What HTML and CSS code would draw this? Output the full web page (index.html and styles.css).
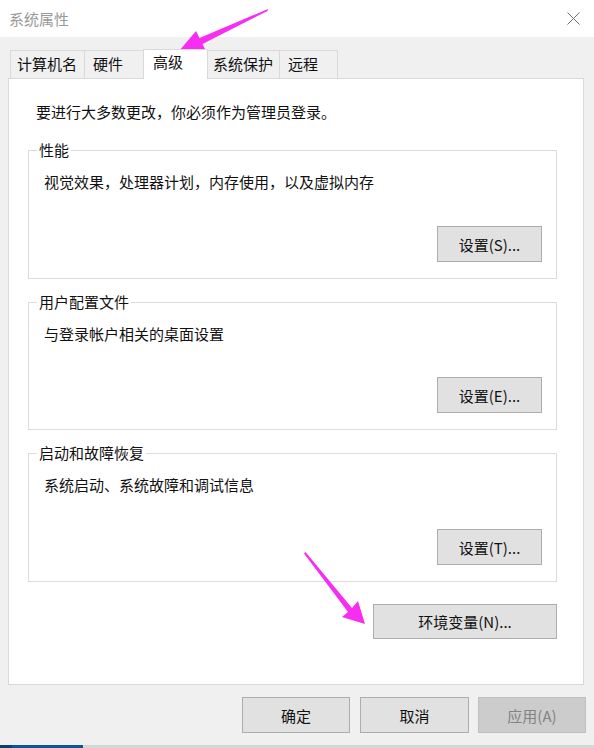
FILE: index.html
```html
<!DOCTYPE html>
<html lang="zh-CN">
<head>
<meta charset="utf-8">
<title>系统属性</title>
<link rel="stylesheet" href="styles.css">
</head>
<body>
<div class="window">
  <div class="titlebar">
    <span class="title">系统属性</span>
    <svg class="close" width="13" height="13" viewBox="0 0 13 13"><path d="M0.5 0.5 L12.5 12.5 M12.5 0.5 L0.5 12.5" stroke="#6b6b6b" stroke-width="1" fill="none"/></svg>
  </div>
  <div class="main">
    <div class="tabs">
      <div class="tab t1">计算机名</div>
      <div class="tab t2">硬件</div>
      <div class="tab active t3">高级</div>
      <div class="tab t4">系统保护</div>
      <div class="tab t5">远程</div>
    </div>
    <div class="panel">
      <p class="intro">要进行大多数更改，你必须作为管理员登录。</p>
      <div class="group">
        <span class="group-title">性能</span>
        <p class="desc">视觉效果，处理器计划，内存使用，以及虚拟内存</p>
        <button class="btn small">设置(S)...</button>
      </div>
      <div class="group mid">
        <span class="group-title">用户配置文件</span>
        <p class="desc">与登录帐户相关的桌面设置</p>
        <button class="btn small">设置(E)...</button>
      </div>
      <div class="group last">
        <span class="group-title">启动和故障恢复</span>
        <p class="desc">系统启动、系统故障和调试信息</p>
        <button class="btn small">设置(T)...</button>
      </div>
      <button class="btn env">环境变量(N)...</button>
    </div>
    <div class="footer">
      <button class="btn foot ok">确定</button>
      <button class="btn foot cancel">取消</button>
      <button class="btn foot disabled">应用(A)</button>
    </div>
  </div>
  <div class="strip"><span class="s1"></span><span class="s2"></span><span class="s3"></span></div>
  <svg class="arrows" width="594" height="748" viewBox="0 0 594 748">
    <polygon points="268,9 199.5,38 196,31 179,51 206,51 202.5,44 267.5,11" fill="#f72ef2"/>
    <polygon points="305.5,552 352,608 358,601 365,624 342,617 348,612 304,553.5" fill="#f72ef2"/>
  </svg>
</div>
</body>
</html>
```

FILE: styles.css
```css
* { box-sizing: border-box; }
html, body { margin: 0; padding: 0; }
body {
  font-family: "Noto Sans CJK SC", "Microsoft YaHei", sans-serif;
  font-size: 15px;
  color: #111111;
  background: #f0f0f0;
}
.window {
  position: relative;
  width: 594px;
  height: 748px;
  display: flex;
  flex-direction: column;
  background: #f0f0f0;
  overflow: hidden;
}
.titlebar {
  height: 37px;
  background: #ffffff;
  display: flex;
  align-items: center;
  justify-content: space-between;
  padding: 0 14px 0 9px;
}
.title { color: #9a9a9a; line-height: 20px; }
.close { display: block; margin-top: -1px; }
.main {
  padding: 12px 0 0 8px;
  display: flex;
  flex-direction: column;
}
.tabs {
  display: flex;
  align-items: flex-end;
  height: 30px;
  padding-left: 2px;
  margin-bottom: -1px;
  position: relative;
  z-index: 1;
}
.tab {
  height: 28px;
  margin-bottom: 1px;
  border: 1px solid #d9d9d9;
  border-bottom: none;
  background: #f0f0f0;
  line-height: 25px;
  padding-left: 7px;
  white-space: nowrap;
  margin-left: -1px;
}
.t1 { width: 75px; margin-left: 0; padding-left: 6px; }
.t2 { width: 60px; padding-left: 8px; }
.t3 { width: 65px; }
.t4 { width: 73px; padding-left: 5px; }
.t5 { width: 59px; padding-left: 8px; }
.tab.active {
  height: 30px;
  margin-bottom: 0;
  background: #ffffff;
  padding-left: 9px;
  line-height: 24px;
  border-bottom: none;
}
.panel {
  width: 576px;
  height: 607px;
  background: #ffffff;
  border: 1px solid #d9d9d9;
  padding: 23px 26px 0 19px;
  display: flex;
  flex-direction: column;
}
.intro {
  margin: 0 0 28px 8px;
  line-height: 20px;
}
.group {
  height: 129px;
  border: 1px solid #dcdcdc;
  padding: 0 14px 16px 15px;
  display: flex;
  flex-direction: column;
  margin-bottom: 23px;
}
.group.mid { height: 128px; }
.group.last { margin-bottom: 22px; }
.group-title {
  align-self: flex-start;
  background: #ffffff;
  padding: 0 2px;
  margin: -11px 0 0 -7px;
  line-height: 20px;
}
.desc {
  margin: 12px 0 0 0;
  line-height: 20px;
}
.btn {
  font-family: inherit;
  font-size: 15px;
  color: #111111;
  background: #e1e1e1;
  border: 1px solid #adadad;
  padding: 0;
  margin: 0;
}
.btn.small {
  width: 105px;
  height: 36px;
  margin-top: auto;
  align-self: flex-end;
}
.btn.env {
  width: 184px;
  height: 35px;
  align-self: flex-end;
}
.footer {
  display: flex;
  justify-content: flex-end;
  gap: 9px;
  padding: 12px 8px 0 0;
}
.btn.foot { width: 108px; height: 36px; }
.btn.ok { margin-right: 1px; }
.btn.cancel { width: 109px; }
.btn.disabled {
  background: #cccccc;
  border-color: #bfbfbf;
  color: #838383;
}
.strip {
  margin-top: auto;
  height: 3px;
  display: flex;
}
.s1 { width: 12px; background: #0b3f6e; }
.s2 { width: 71px; background: #0f5596; }
.s3 { flex: 1; background: #d6d6d6; }
.arrows {
  position: absolute;
  left: 0;
  top: 0;
  pointer-events: none;
}
```
